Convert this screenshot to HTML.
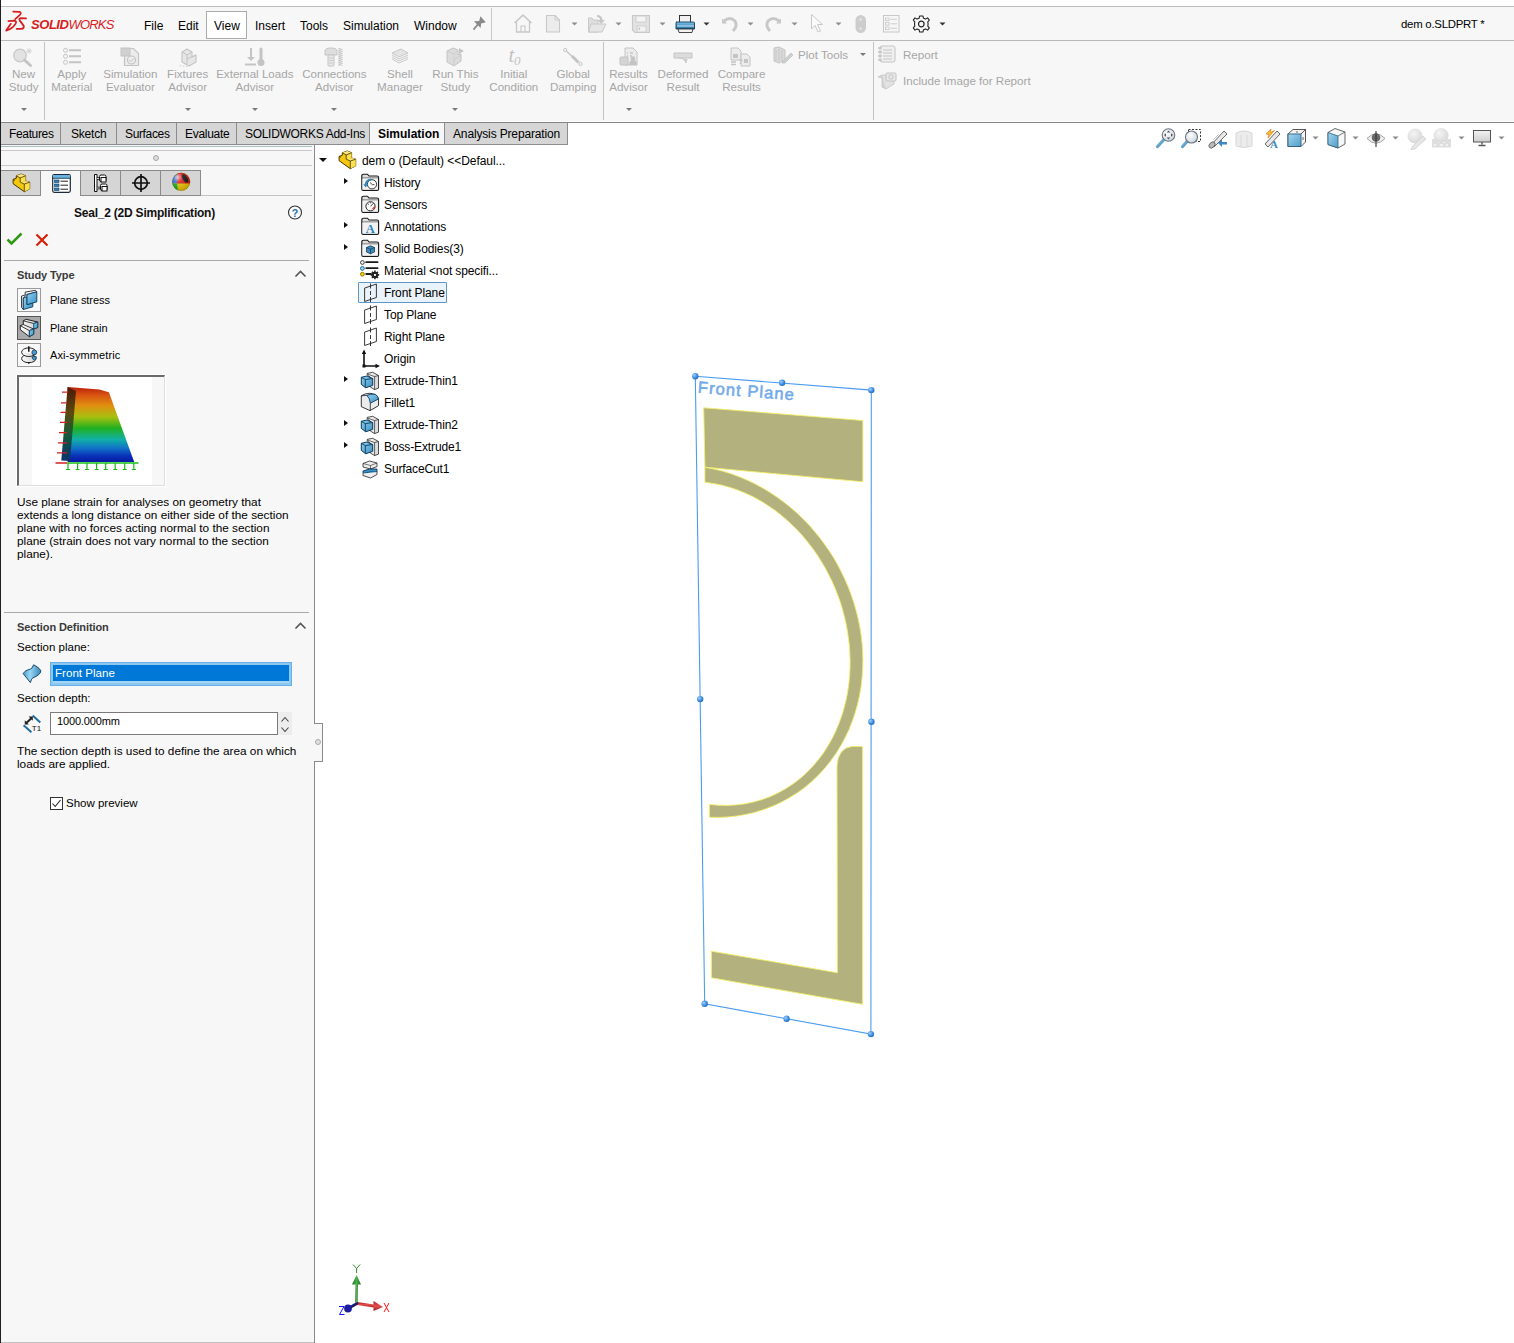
<!DOCTYPE html>
<html><head><meta charset="utf-8">
<style>
*{margin:0;padding:0;box-sizing:border-box}
html,body{width:1514px;height:1343px;overflow:hidden;background:#fff;font-family:"Liberation Sans",sans-serif;font-size:12px;color:#000}
.a{position:absolute}
svg{overflow:visible}
.t{position:absolute;white-space:nowrap;line-height:1}
#lb{left:0;top:0;width:1px;height:1343px;background:#1d2125}
#menubar{left:1px;top:6px;width:1513px;height:35px;background:#f7f7f7;border-top:1px solid #bdbdbd;border-bottom:1px solid #b9b9b9}
#ribbon{left:1px;top:41px;width:1513px;height:80px;background:#f7f7f7;border-bottom:0}
.rt{position:absolute;color:#a6a6a6;text-align:center;line-height:13px;font-size:11.6px;white-space:nowrap}
.dd{position:absolute;width:0;height:0;border-left:3px solid transparent;border-right:3px solid transparent;border-top:3px solid #7a7a7a}
.vsep{position:absolute;width:1px;background:#c3c3c3}
#tabbar{left:1px;top:123px;width:567px;height:22px;background:#d6d6d6;border-bottom:1px solid #8c8c8c}
.tab{position:absolute;top:0;height:21px;border-right:1px solid #8c8c8c;text-align:center;line-height:20px;font-size:12px}
#panel{left:1px;top:145px;width:313px;height:1198px;background:#f7f7f7}
#pborder{left:314px;top:145px;width:1px;height:1198px;background:#8a8a8a}
.hl{position:absolute;height:1px;background:#b5b5b5}
.pt{position:absolute;white-space:nowrap;font-size:11.5px;line-height:13px;color:#000}
.tree{position:absolute;white-space:nowrap;font-size:12px;line-height:14px;color:#000}
</style></head><body>
<div id="lb" class="a"></div>
<div id="menubar" class="a"></div>
<div id="ribbon" class="a"></div>

<!-- logo -->
<svg class="a" style="left:0px;top:6px" width="30" height="30" viewBox="0 0 30 30">
 <path d="M13.2 5.6 L19.3 5.8 Q21.6 6.3 20.2 8.6 L15.2 13.2" fill="none" stroke="#d71d1d" stroke-width="1.7" stroke-linecap="round" stroke-linejoin="round"/>
 <path d="M8.4 15.2 L14.2 14.6 Q17 14.8 15.6 17.6 Q12.5 22.8 6.2 24.6 L10.8 17.8" fill="none" stroke="#d71d1d" stroke-width="1.75" stroke-linecap="round" stroke-linejoin="round"/>
 <path d="M26 12.4 L20.8 12.2 Q18.6 12.4 19.8 14.6 L23.6 19.6 Q24.6 22.6 21.2 22.8 L16.6 22.8" fill="none" stroke="#d71d1d" stroke-width="1.8" stroke-linecap="round" stroke-linejoin="round"/>
</svg>
<div class="t" style="left:31px;top:18px;font-size:13px;color:#d71d1d;font-style:italic"><span style="font-weight:bold;letter-spacing:-0.45px">SOLID</span><span style="letter-spacing:-0.8px">WORKS</span></div>
<div class="a" style="left:206px;top:11px;width:41px;height:28px;background:#fff;border:1px solid #aaa"></div>
<div class="t" style="left:144px;top:20px">File</div>
<div class="t" style="left:178px;top:20px">Edit</div>
<div class="t" style="left:214px;top:20px">View</div>
<div class="t" style="left:255px;top:20px">Insert</div>
<div class="t" style="left:300px;top:20px">Tools</div>
<div class="t" style="left:343px;top:20px">Simulation</div>
<div class="t" style="left:414px;top:20px">Window</div>
<svg class="a" style="left:466px;top:10px" width="30" height="28" viewBox="466 10 30 28"><path d="M474 21.3 L479.2 21 L480.4 16.3 L485.8 22.3 L481.2 23.4 L480.6 28.1 Z" fill="#8a8a8a"/><path d="M478.5 23.6 L473.5 29.6" stroke="#8a8a8a" stroke-width="1.7"/></svg>
<div class="vsep" style="left:491px;top:8px;height:32px;background:#c8c8c8"></div>

<svg class="a" style="left:505px;top:10px" width="450" height="28" viewBox="505 10 450 28">
 <defs><linearGradient id="prb" x1="0" y1="0" x2="0" y2="1"><stop offset="0" stop-color="#7cc4ec"/><stop offset="1" stop-color="#1d6a9c"/></linearGradient></defs>
 <!-- home -->
 <path d="M514.5 23 L523 15.2 L531.5 23" fill="none" stroke="#c8c8c8" stroke-width="1.6"/>
 <path d="M516.5 21.5 V32 H529.5 V21.5" fill="none" stroke="#c8c8c8" stroke-width="1.3"/>
 <path d="M521 32 V26 H525 V32" fill="none" stroke="#c8c8c8" stroke-width="1.1"/>
 <!-- new -->
 <path d="M546.5 15.5 H555 L559.5 20 V32 H546.5 Z" fill="#ececec" stroke="#c8c8c8" stroke-width="1.1"/>
 <path d="M555 15.5 V20 H559.5" fill="none" stroke="#c8c8c8" stroke-width="0.9"/>
 <path d="M571.5 22.5h6l-3 3z" fill="#8e8e8e"/>
 <!-- open -->
 <path d="M588.5 18 H592 L593.5 20 H598 V32 H588.5 Z" fill="#dedede" stroke="#c8c8c8" stroke-width="1"/>
 <path d="M591 24 H606 L602 32 H588.5 Z" fill="#e6e6e6" stroke="#c8c8c8" stroke-width="1"/>
 <path d="M597 15 Q602 15 602.5 20 L605 20 L601 24 L597.5 20 L600 20 Q600 17 597 17 Z" fill="#c6c6c6"/>
 <path d="M615.5 22.5h6l-3 3z" fill="#8e8e8e"/>
 <!-- save -->
 <path d="M632.5 15.5 H649.5 V32.5 H635 L632.5 30 Z" fill="#e2e2e2" stroke="#c8c8c8" stroke-width="1.1"/>
 <rect x="636" y="16" width="10" height="6" fill="#f4f4f4" stroke="#c8c8c8" stroke-width="0.8"/>
 <rect x="637" y="26" width="9" height="6" fill="#f2f2f2" stroke="#c8c8c8" stroke-width="0.8"/><rect x="638.5" y="27.5" width="1.5" height="2.5" fill="#c8c8c8"/>
 <path d="M659.5 22.5h6l-3 3z" fill="#8e8e8e"/>
 <!-- print -->
 <rect x="679.5" y="15.5" width="11" height="8" fill="#f0f0f0" stroke="#333" stroke-width="1"/>
 <path d="M676.5 22 H693.5 Q694.5 22 694.5 23 V29 H676 V23 Q676 22 677 22 Z" fill="url(#prb)" stroke="#123a55" stroke-width="0.9"/>
 <path d="M677 26 H694" stroke="#dff2ff" stroke-width="0.9"/>
 <path d="M678 29 L679 32.5 H692 L693 29 Z" fill="#f2f2f2" stroke="#333" stroke-width="0.9"/>
 <path d="M703.5 22.5h6l-3 3z" fill="#333"/>
 <!-- undo -->
 <path d="M722 18.5 V23.5 H727 Z" fill="#c8c8c8"/>
 <path d="M724 21 Q730 16 735 21 Q738 26 733 31" fill="none" stroke="#c8c8c8" stroke-width="3"/>
 <path d="M747.5 22.5h6l-3 3z" fill="#8e8e8e"/>
 <!-- redo -->
 <path d="M781 18.5 V23.5 H776 Z" fill="#c8c8c8"/>
 <path d="M779 21 Q773 16 768 21 Q765 26 770 31" fill="none" stroke="#c8c8c8" stroke-width="3"/>
 <path d="M791.5 22.5h6l-3 3z" fill="#8e8e8e"/>
 <!-- select -->
 <path d="M811.5 14.5 V29 L815 25.5 L818 32 L820.5 31 L817.5 24.5 L822.5 24.5 Z" fill="#fafafa" stroke="#c8c8c8" stroke-width="1"/>
 <path d="M835.5 22.5h6l-3 3z" fill="#8e8e8e"/>
 <!-- traffic -->
 <rect x="855.5" y="15" width="10.5" height="18" rx="5.2" fill="#cdcdcd"/>
 <circle cx="860.7" cy="19.5" r="1.2" fill="#e6e6e6"/><circle cx="860.7" cy="28.5" r="1.2" fill="#e6e6e6"/>
 <!-- options list -->
 <rect x="883.5" y="15.5" width="15.5" height="16.5" fill="#f6f6f6" stroke="#c8c8c8" stroke-width="1"/>
 <rect x="885.5" y="18" width="3.5" height="2.6" fill="none" stroke="#c8c8c8" stroke-width="0.8"/><rect x="885.5" y="22.5" width="3.5" height="2.6" fill="none" stroke="#c8c8c8" stroke-width="0.8"/><rect x="885.5" y="27" width="3.5" height="2.6" fill="none" stroke="#c8c8c8" stroke-width="0.8"/>
 <path d="M890.5 19.3H897M890.5 23.8H897M890.5 28.3H897" stroke="#c8c8c8" stroke-width="0.9"/>
 <!-- gear -->
 <g transform="translate(921.3 24)">
  <path d="M-1.6 -8 H1.6 L2.2 -5.8 L4.3 -4.9 L6.3 -6.1 L8 -3.9 L6.5 -2.2 L6.8 0 L6.5 2.2 L8 3.9 L6.3 6.1 L4.3 4.9 L2.2 5.8 L1.6 8 H-1.6 L-2.2 5.8 L-4.3 4.9 L-6.3 6.1 L-8 3.9 L-6.5 2.2 L-6.8 0 L-6.5 -2.2 L-8 -3.9 L-6.3 -6.1 L-4.3 -4.9 L-2.2 -5.8 Z" fill="#f7f7f7" stroke="#222" stroke-width="1.1" stroke-linejoin="round"/>
  <circle r="2.8" fill="#f7f7f7" stroke="#222" stroke-width="1.2"/>
 </g>
 <path d="M939.5 22.5h6l-3 3z" fill="#333"/>
</svg>
<div class="t" style="left:1401px;top:18.6px;font-size:11.4px;letter-spacing:-0.25px">dem o.SLDPRT *</div>

<div class="rt" style="left:-21.4px;top:67px;width:90px">New<br>Study</div><div class="dd" style="left:20.6px;top:108px"></div><div class="rt" style="left:26.799999999999997px;top:67px;width:90px">Apply<br>Material</div><div class="rt" style="left:85.4px;top:67px;width:90px">Simulation<br>Evaluator</div><div class="rt" style="left:142.7px;top:67px;width:90px">Fixtures<br>Advisor</div><div class="dd" style="left:184.7px;top:108px"></div><div class="rt" style="left:209.8px;top:67px;width:90px">External Loads<br>Advisor</div><div class="dd" style="left:251.8px;top:108px"></div><div class="rt" style="left:289.4px;top:67px;width:90px">Connections<br>Advisor</div><div class="dd" style="left:331.4px;top:108px"></div><div class="rt" style="left:355.0px;top:67px;width:90px">Shell<br>Manager</div><div class="rt" style="left:410.4px;top:67px;width:90px">Run This<br>Study</div><div class="dd" style="left:452.4px;top:108px"></div><div class="rt" style="left:468.79999999999995px;top:67px;width:90px">Initial<br>Condition</div><div class="rt" style="left:528.2px;top:67px;width:90px">Global<br>Damping</div><div class="rt" style="left:583.5px;top:67px;width:90px">Results<br>Advisor</div><div class="dd" style="left:625.5px;top:108px"></div><div class="rt" style="left:638.0px;top:67px;width:90px">Deformed<br>Result</div><div class="rt" style="left:696.6px;top:67px;width:90px">Compare<br>Results</div><div class="vsep" style="left:44px;top:42px;height:78px"></div><div class="vsep" style="left:603px;top:42px;height:78px"></div><div class="vsep" style="left:873px;top:42px;height:78px"></div><div class="rt" style="left:798px;top:48px;text-align:left">Plot Tools</div><div class="dd" style="left:860px;top:53px"></div><div class="rt" style="left:903px;top:48px;text-align:left">Report</div><div class="rt" style="left:903px;top:74px;text-align:left">Include Image for Report</div>
<svg class="a" style="left:12px;top:47px" width="22" height="20" viewBox="0 0 22 20">
 <circle cx="8" cy="8.5" r="6.3" fill="#e2e2e2" stroke="#c8c8c8" stroke-width="1.2"/>
 <path d="M12.5 13 L18.5 18.5" stroke="#c4c4c4" stroke-width="3" stroke-linecap="round"/>
 <path d="M17 1v6M14 4h6M15 2l4 4M19 2l-4 4" stroke="#d0d0d0" stroke-width="0.8"/>
</svg>
<svg class="a" style="left:62px;top:47px" width="22" height="19" viewBox="0 0 22 19">
 <circle cx="3.5" cy="3.3" r="2" fill="none" stroke="#c4c4c4"/><circle cx="3.5" cy="9.3" r="2" fill="none" stroke="#c4c4c4"/><circle cx="3.5" cy="15.3" r="2" fill="none" stroke="#c4c4c4"/>
 <path d="M7 3.3h12M7 9.3h12M7 15.3h12" stroke="#c4c4c4" stroke-width="2"/>
</svg>
<svg class="a" style="left:120px;top:47px" width="20" height="20" viewBox="0 0 20 20">
 <path d="M4.5 1.5h9l5 5v12h-14z" fill="#ececec" stroke="#c4c4c4" stroke-width="1.2"/>
 <rect x="1" y="1" width="9" height="8" fill="#d0d0d0" stroke="#c4c4c4"/>
 <circle cx="11.5" cy="13" r="4" fill="none" stroke="#c4c4c4" stroke-width="1.2"/><path d="M9.5 13l1.5 1.5 2.8-3" stroke="#c4c4c4" fill="none"/>
</svg>
<svg class="a" style="left:179px;top:47px" width="20" height="20" viewBox="0 0 20 20">
 <path d="M3 5l5-3 5 3v5l4-2 0 0v7l-7 4-7-4z" fill="#e6e6e6" stroke="#c4c4c4" stroke-width="1.1" stroke-linejoin="round"/>
 <path d="M3 5l5 3 5-3M8 8v9M8 12l9-4" fill="none" stroke="#c4c4c4" stroke-width="1"/>
 <path d="M2 18l-1 1.5M5 18.5l-1 1.5M8 19l-1 1" stroke="#c4c4c4" stroke-width="0.8"/>
</svg>
<svg class="a" style="left:244px;top:47px" width="22" height="20" viewBox="0 0 22 20">
 <path d="M7 1v12" stroke="#c4c4c4" stroke-width="2"/><path d="M3 10l4 4 4-4z" fill="#c4c4c4"/><path d="M1 17.5h11" stroke="#c4c4c4" stroke-width="2"/>
 <path d="M17 2v11" stroke="#c4c4c4" stroke-width="3" stroke-linecap="round"/><circle cx="17" cy="15.5" r="3.5" fill="#c4c4c4"/>
</svg>
<svg class="a" style="left:324px;top:47px" width="22" height="20" viewBox="0 0 22 20">
 <path d="M1 4q0-3 6-3t6 3v4h-12z" fill="#dedede" stroke="#c4c4c4"/><rect x="4" y="8" width="6" height="11" rx="1" fill="#e8e8e8" stroke="#c4c4c4"/>
 <path d="M5 11h4M5 13.5h4M5 16h4" stroke="#c4c4c4" stroke-width="0.8"/>
 <path d="M15 1.5l3.5 1-3.5 1 3.5 1-3.5 1 3.5 1-3.5 1 3.5 1-3.5 1 3.5 1-3.5 1 3.5 1-3.5 1 3.5 1-3.5 1 3.5 1-3.5 1 3.5 1" fill="none" stroke="#c4c4c4" stroke-width="0.8"/><path d="M15 1v18" stroke="#c4c4c4" stroke-width="0.9"/>
</svg>
<svg class="a" style="left:391px;top:48px" width="18" height="16" viewBox="0 0 18 16">
 <path d="M1 5l9-4 7 4-9 4z" fill="#e4e4e4" stroke="#c4c4c4" stroke-width="0.9"/>
 <path d="M1 7l7 4 9-4M1 9l7 4 9-4M1 11l7 4 9-4" fill="none" stroke="#c4c4c4" stroke-width="0.9"/>
</svg>
<svg class="a" style="left:446px;top:47px" width="19" height="20" viewBox="0 0 19 20">
 <path d="M1 4l6-3 5 2v5l3-1v7l-7 5-7-4z" fill="#dcdcdc" stroke="#c4c4c4" stroke-linejoin="round"/>
 <path d="M1 4l7 3 4-4M8 7v12M8 13l7-5" fill="none" stroke="#cfcfcf"/>
 <path d="M13 1v6l5-3z" fill="#c4c4c4"/>
</svg>
<svg class="a" style="left:500px;top:44px" width="30" height="26" viewBox="500 44 30 26"><text x="508.5" y="62" font-family="Liberation Serif" font-style="italic" font-size="21" fill="#c2c2c2">t</text><text x="514" y="64.5" font-family="Liberation Serif" font-style="italic" font-size="13" fill="#c2c2c2">0</text></svg>
<svg class="a" style="left:563px;top:48px" width="20" height="18" viewBox="0 0 20 18">
 <circle cx="2.2" cy="2" r="1.6" fill="none" stroke="#c4c4c4"/><circle cx="17.5" cy="16" r="1.6" fill="none" stroke="#c4c4c4"/>
 <path d="M3.5 3.2l6 5.5" stroke="#c4c4c4" stroke-width="1.3"/><path d="M9 8l6.5 6.5" stroke="#c4c4c4" stroke-width="3"/>
</svg>
<svg class="a" style="left:619px;top:47px" width="19" height="19" viewBox="0 0 19 19">
 <path d="M6 1h8l4 4v13h-12z" fill="#ececec" stroke="#c4c4c4"/>
 <path d="M8 6h1M11 6h3M8 9h1M11 9h2M8 12h1" stroke="#c4c4c4" stroke-width="1.3"/>
 <rect x="1" y="10" width="8" height="8" rx="1" fill="#d4d4d4" stroke="#c4c4c4"/><circle cx="14" cy="11.5" r="2.3" fill="#c4c4c4"/><path d="M10 18q0-5 4-5t4 5z" fill="#c4c4c4"/>
</svg>
<svg class="a" style="left:673px;top:52px" width="20" height="11" viewBox="0 0 20 11">
 <path d="M1 1h18v5h-18z" fill="#dcdcdc" stroke="#c4c4c4"/><path d="M6 6q4 0 6 3l1 2 1-4" fill="#cfcfcf" stroke="#c4c4c4" stroke-width="0.8"/>
</svg>
<svg class="a" style="left:730px;top:47px" width="22" height="20" viewBox="0 0 22 20">
 <path d="M1 1h7l3 3v9h-10z" fill="#ececec" stroke="#c4c4c4"/><rect x="3" y="7" width="5" height="4" fill="#c4c4c4"/>
 <path d="M11 7h6l3 3v9h-9z" fill="#ececec" stroke="#c4c4c4"/><rect x="14" y="12" width="4" height="4" fill="#c4c4c4"/>
 <path d="M1 15h5M1 17.5h5" stroke="#c4c4c4" stroke-width="1.4"/><text x="8" y="17" font-size="8" font-family="Liberation Sans" font-weight="bold" fill="#c4c4c4">?</text>
</svg>
<svg class="a" style="left:772px;top:46px" width="22" height="18" viewBox="0 0 22 18">
 <path d="M2 2l5-1 6 3v10l-6 3-5-2z" fill="#dadada" stroke="#c4c4c4"/><path d="M4 4v11M7 3v12M10 4v11" stroke="#c8c8c8"/>
 <path d="M11 15l8-8 2 2-8 8-3 0z" fill="#cfcfcf" stroke="#c4c4c4" stroke-width="0.8"/>
</svg>
<svg class="a" style="left:877px;top:45px" width="20" height="18" viewBox="0 0 20 18">
 <rect x="3" y="1" width="15" height="16" rx="2" fill="#f0f0f0" stroke="#c4c4c4"/><path d="M6 5h9M6 8h9M6 11h9M6 14h9" stroke="#c4c4c4"/>
 <path d="M1 3h4M1 7h4M1 11h4M1 15h4" stroke="#c4c4c4" stroke-width="1.3"/>
</svg>
<svg class="a" style="left:877px;top:71px" width="20" height="19" viewBox="0 0 20 19">
 <path d="M1 6l4-2v12l4 2v-11z" fill="#d4d4d4" stroke="#c4c4c4" stroke-width="0.8"/><path d="M5 4l12 0v9l-8 5" fill="#e2e2e2" stroke="#c4c4c4" stroke-width="0.8"/>
 <rect x="9" y="2" width="10" height="8" rx="1" fill="#e8e8e8" stroke="#c4c4c4"/><circle cx="14" cy="6" r="2.2" fill="none" stroke="#c4c4c4"/>
</svg>

<div id="tabbar" class="a"></div>
<div class="a" style="left:1px;top:122px;width:1513px;height:1px;background:#858585"></div>
<div id="panel" class="a"></div>
<div id="pborder" class="a"></div>

<div class="a" style="left:60px;top:123px;width:1px;height:21px;background:#8c8c8c"></div>
<div class="a" style="left:116px;top:123px;width:1px;height:21px;background:#8c8c8c"></div>
<div class="a" style="left:176px;top:123px;width:1px;height:21px;background:#8c8c8c"></div>
<div class="a" style="left:236px;top:123px;width:1px;height:21px;background:#8c8c8c"></div>
<div class="a" style="left:369px;top:123px;width:1px;height:21px;background:#8c8c8c"></div>
<div class="a" style="left:370px;top:123px;width:74px;height:21px;background:#f7f7f7"></div>
<div class="a" style="left:444px;top:123px;width:1px;height:21px;background:#8c8c8c"></div>
<div class="a" style="left:567px;top:123px;width:1px;height:22px;background:#8c8c8c"></div>
<div class="t" style="left:9px;top:128px;letter-spacing:-0.35px">Features</div>
<div class="t" style="left:71px;top:128px;letter-spacing:-0.2px">Sketch</div>
<div class="t" style="left:125px;top:128px;letter-spacing:-0.35px">Surfaces</div>
<div class="t" style="left:185px;top:128px;letter-spacing:-0.3px">Evaluate</div>
<div class="t" style="left:245px;top:128px;letter-spacing:-0.3px">SOLIDWORKS Add-Ins</div>
<div class="t" style="left:378px;top:128px;font-weight:bold">Simulation</div>
<div class="t" style="left:453px;top:128px;letter-spacing:-0.15px">Analysis Preparation</div>

<div class="hl" style="left:1px;top:146px;width:311px;background:#a6c0c4"></div>
<div class="hl" style="left:1px;top:147px;width:311px;height:3px;background:#fafafa"></div>
<div class="hl" style="left:1px;top:150px;width:311px;background:#c9c9c9"></div>
<div class="a" style="left:153px;top:155px;width:6px;height:6px;border-radius:50%;border:1px solid #a8a8a8;background:#dcdcdc"></div>
<div class="hl" style="left:1px;top:165px;width:311px;background:#c9c9c9"></div>
<div class="a" style="left:1px;top:170px;width:200px;height:26px;background:#d5d5d5;border-top:1px solid #8a8a8a;border-bottom:1px solid #8a8a8a"></div>
<div class="hl" style="left:200px;top:195px;width:112px;background:#c4c4c4"></div>
<div class="a" style="left:41px;top:171px;width:39px;height:25px;background:#f7f7f7"></div>
<div class="a" style="left:40px;top:171px;width:1px;height:24px;background:#8a8a8a"></div>
<div class="a" style="left:80px;top:171px;width:1px;height:24px;background:#8a8a8a"></div>
<div class="a" style="left:120px;top:171px;width:1px;height:24px;background:#8a8a8a"></div>
<div class="a" style="left:160px;top:171px;width:1px;height:24px;background:#8a8a8a"></div>
<div class="a" style="left:200px;top:170px;width:1px;height:26px;background:#8a8a8a"></div>
<!-- part icon -->
<svg class="a" style="left:9px;top:171px" width="25" height="25" viewBox="0 0 25 25"><path d="M4.1 8.4 L7.3 7.3 L7.3 4.8 L12.3 3 L16.6 4.8 L16.6 10 L20.7 11.2 L20.7 17.9 L15.3 20.7 L4.1 12.7 Z" fill="#f3c80f" stroke="#4a3600" stroke-width="1" stroke-linejoin="round"/>
 <path d="M7.3 4.8 L11.2 6.9 L16.6 4.8 L12.3 3 Z" fill="#fbe680"/>
 <path d="M11.2 6.9 L16.6 4.8 L16.6 10 L14.1 11.2 L11.2 11.2 Z" fill="#f9e050"/>
 <path d="M11.2 11.2 L14.1 11.2 L17.9 9.9 L20.7 11.2 L15.3 13 Z" fill="#fbe680"/>
 <path d="M15.3 13 L20.7 11.2 L20.7 17.9 L15.3 20.7 Z" fill="#f9e050"/>
 <path d="M7.3 4.8 L11.2 6.9 L16.6 4.8 M11.2 6.9 V11.2 L15.3 13 L20.7 11.2 M15.3 13 V20.7 M4.1 8.4 L6 9.4" fill="none" stroke="#4a3600" stroke-width="0.8"/></svg>
<!-- property list icon -->
<svg class="a" style="left:52px;top:174px" width="19" height="19" viewBox="0 0 19 19">
 <rect x="0.7" y="0.7" width="17.6" height="17.6" rx="1.5" fill="#fff" stroke="#1c2a38" stroke-width="1.2"/>
 <rect x="1" y="1" width="17" height="3" fill="#6ab4e0"/><path d="M1 4.3h17" stroke="#0e3a5c" stroke-width="0.9"/>
 <rect x="2.5" y="6" width="4.5" height="2.5" fill="#2e7fb8" stroke="#0e3a5c" stroke-width="0.6"/><rect x="2.5" y="10" width="4.5" height="2.5" fill="#2e7fb8" stroke="#0e3a5c" stroke-width="0.6"/><rect x="2.5" y="14" width="4.5" height="2.5" fill="#2e7fb8" stroke="#0e3a5c" stroke-width="0.6"/>
 <path d="M8.5 7.2h7.5M8.5 11.2h7.5M8.5 15.2h7.5" stroke="#222" stroke-width="1"/>
</svg>
<!-- config icon -->
<svg class="a" style="left:93px;top:173px" width="16" height="20" viewBox="0 0 16 20">
 <path d="M1.5 1.5h2.5v17h-2.5z" fill="#fff" stroke="#111" stroke-width="1"/>
 <path d="M4 5.5h3M4 15h3" stroke="#111" stroke-width="2.6"/><path d="M4 5.5h3M4 15h3" stroke="#fff" stroke-width="0.8"/>
 <rect x="6.5" y="2" width="6.5" height="6.5" rx="1.5" fill="#fff" stroke="#111"/><rect x="8" y="4.5" width="5" height="4.5" fill="#fff" stroke="#111"/>
 <rect x="7.5" y="11" width="6.5" height="6.5" rx="1.5" fill="#fff" stroke="#111"/><rect x="9" y="13.5" width="5" height="4.5" fill="#fff" stroke="#111"/>
</svg>
<!-- crosshair -->
<svg class="a" style="left:131px;top:173px" width="20" height="20" viewBox="0 0 20 20">
 <circle cx="10" cy="10" r="6.3" fill="none" stroke="#111" stroke-width="1.7"/><path d="M10 1v18M1 10h18" stroke="#111" stroke-width="1.7"/>
</svg>
<!-- appearance ball -->
<svg class="a" style="left:168px;top:170px" width="28" height="26" viewBox="168 170 28 26">
 <defs><radialGradient id="bg1" cx="0.3" cy="0.25" r="0.75"><stop offset="0" stop-color="#fff" stop-opacity="0.75"/><stop offset="0.35" stop-color="#fff" stop-opacity="0.15"/><stop offset="1" stop-color="#000" stop-opacity="0.15"/></radialGradient>
 <clipPath id="ballc"><circle cx="181.2" cy="181.8" r="9"/></clipPath></defs>
 <g clip-path="url(#ballc)">
  <rect x="160" y="160" width="40" height="40" fill="#e8c000"/>
  <path d="M177.1 165 L177.1 183.6 L200 183.6 L200 160 Z" fill="#d81818"/>
  <path d="M177.1 160 L177.1 183.6 L160 183.6 L160 160 Z" fill="#2a66d8"/>
  <path d="M160 183.6 L177.1 183.6 L179 200 L160 200 Z" fill="#10b020"/>
  <ellipse cx="185" cy="178.5" rx="2.3" ry="4.6" transform="rotate(-32 185 178.5)" fill="#111"/>
  <circle cx="181.2" cy="181.8" r="9" fill="url(#bg1)"/>
 </g>
 <circle cx="181.2" cy="181.8" r="8.7" fill="none" stroke="#5a3a10" stroke-opacity="0.45" stroke-width="0.7"/>
</svg>


<div class="t" style="left:74px;top:207px;font-size:12px;font-weight:bold;letter-spacing:-0.22px;color:#111">Seal_2 (2D Simplification)</div>
<svg class="a" style="left:287px;top:205px" width="16" height="16" viewBox="0 0 16 16"><circle cx="8" cy="7.5" r="6.5" fill="#fafafa" stroke="#333" stroke-width="1.1"/><text x="8" y="11.5" text-anchor="middle" font-family="Liberation Sans" font-weight="bold" font-size="10.5" fill="#1f6fb5">?</text></svg>
<svg class="a" style="left:6px;top:232px" width="17" height="14" viewBox="0 0 17 14"><path d="M1.5 7.5 L5.5 11.5 L15.5 1.5" fill="none" stroke="#2e9a14" stroke-width="2.5"/></svg>
<svg class="a" style="left:35px;top:233px" width="14" height="14" viewBox="0 0 14 14"><path d="M1.5 1.5 L12.5 12.5 M12.5 1.5 L1.5 12.5" fill="none" stroke="#d8200a" stroke-width="2.2"/></svg>
<div class="hl" style="left:4px;top:260px;width:305px;background:#a8a8a8"></div>
<div class="t" style="left:17px;top:270px;font-size:11px;font-weight:bold;color:#3a3a3a;letter-spacing:-0.1px">Study Type</div>
<svg class="a" style="left:294px;top:269px" width="13" height="9" viewBox="0 0 13 9"><path d="M1.5 7.5 L6.5 2.5 L11.5 7.5" fill="none" stroke="#555" stroke-width="1.6"/></svg>
<div class="a" style="left:17px;top:288px;width:24px;height:24px;border:1px solid #9a9a9a;background:#f9f9f9"></div>
<div class="a" style="left:17px;top:316px;width:24px;height:24px;border:1px solid #555;background:#a9a9a9"></div>
<div class="a" style="left:17px;top:343px;width:24px;height:24px;border:1px solid #9a9a9a;background:#f9f9f9"></div>
<!-- study type icons -->
<svg class="a" style="left:17px;top:288px" width="24" height="80" viewBox="17 288 24 80">
 <defs><linearGradient id="psb" x1="0" y1="0" x2="1" y2="1"><stop offset="0" stop-color="#8ed4f4"/><stop offset="1" stop-color="#3a8cc0"/></linearGradient>
 <linearGradient id="wg2" x1="0" y1="0" x2="1" y2="0"><stop offset="0" stop-color="#fdfdfd"/><stop offset="1" stop-color="#cfcfcf"/></linearGradient></defs>
 <path d="M21.5 296.1 L25.2 295 L25.2 292.1 L35.5 290.3 L36.8 291.8 L27 294.5 L23.3 297.9 L23.3 309.5 L21.5 307.4 Z" fill="#f4f4f4" stroke="#111" stroke-width="0.8" stroke-linejoin="round"/>
 <path d="M23.3 297.9 L27 296.9 L27 304.6 L32.8 303 L32.8 306.8 L23.3 309.5 Z" fill="url(#psb)" stroke="#0b3a5c" stroke-width="0.9" stroke-linejoin="round"/>
 <path d="M27 294.5 L36.8 291.8 L36.8 301.9 L27 304.6 Z" fill="url(#psb)" stroke="#0b3a5c" stroke-width="0.9" stroke-linejoin="round"/>
 <!-- plane strain -->
 <path d="M20.3 325.7 L23.3 324.5 L23.3 320.8 L26.1 319.3 L37.7 322 L37.7 327.5 L33.7 329 L33.7 334.2 L29.4 336.7 L20.3 329.7 Z" fill="url(#wg2)" stroke="#111" stroke-width="0.9" stroke-linejoin="round"/>
 <path d="M23.3 320.8 L33.7 323.5 L37.7 322 M23.3 324.5 L33.7 329 M20.3 325.7 L29.4 330.6 L33.7 329 M29.4 330.6 V336.7" fill="none" stroke="#111" stroke-width="0.8"/>
 <path d="M33.7 323.5 L37.7 322 L37.7 327.5 L33.7 329 Z M29.4 330.6 L33.7 328.9 L33.7 334.2 L29.4 336.7 Z" fill="url(#psb)" stroke="#0b3a5c" stroke-width="0.8"/>
 <!-- axi -->
 <ellipse cx="28.8" cy="358.6" rx="7.2" ry="4.1" fill="url(#wg2)" stroke="#111" stroke-width="0.9"/>
 <ellipse cx="28.8" cy="352.2" rx="7.2" ry="4.3" fill="url(#wg2)" stroke="#111" stroke-width="0.9"/>
 <ellipse cx="28.8" cy="351" rx="5.5" ry="2.2" fill="#fafafa"/>
 <path d="M28.8 346.3 V351.8" stroke="#111" stroke-width="1.5"/><circle cx="28.8" cy="362.8" r="0.9" fill="#111"/>
 <circle cx="34.3" cy="352.4" r="2.4" fill="#4a9ccc" stroke="#0b3a5c" stroke-width="0.8"/>
 <path d="M32 357 Q34.3 356 36.4 356.8 Q36 359.8 34.3 360.3 Q32.5 359.5 32 357 Z" fill="#4a9ccc" stroke="#0b3a5c" stroke-width="0.8"/>
</svg>
<div class="t" style="left:50px;top:295px;font-size:11px;letter-spacing:-0.05px">Plane stress</div>
<div class="t" style="left:50px;top:323px;font-size:11px;letter-spacing:-0.05px">Plane strain</div>
<div class="t" style="left:50px;top:350px;font-size:11px;letter-spacing:0.1px">Axi-symmetric</div>
<!-- preview image -->
<div class="a" style="left:16px;top:374px;width:150px;height:113px;background:#f7f7f7;border-top:1px solid #fff;border-left:1px solid #fff;border-right:1px solid #fff;border-bottom:1px solid #fff"></div><div class="a" style="left:17px;top:375px;width:148px;height:111px;border-top:2px solid #6a6a6a;border-left:2px solid #6a6a6a;border-right:1px solid #dedede;border-bottom:1px solid #dedede"></div>
<div class="a" style="left:32px;top:377px;width:120px;height:108px;background:#fff"></div>
<svg class="a" style="left:32px;top:378px" width="120" height="106" viewBox="32 378 120 106">
 <defs>
  <linearGradient id="cg" x1="0" y1="0" x2="0" y2="1">
   <stop offset="0" stop-color="#b81e08"/><stop offset="0.1" stop-color="#d85010"/><stop offset="0.25" stop-color="#e09010"/><stop offset="0.4" stop-color="#a8c010"/>
   <stop offset="0.55" stop-color="#20b020"/><stop offset="0.7" stop-color="#10b0a8"/><stop offset="0.82" stop-color="#1070c8"/><stop offset="0.92" stop-color="#0a30b8"/><stop offset="1" stop-color="#0818a0"/>
  </linearGradient>
  <linearGradient id="cg2" x1="0" y1="0" x2="0" y2="1">
   <stop offset="0" stop-color="#501808"/><stop offset="0.35" stop-color="#5a4a10"/><stop offset="0.65" stop-color="#145a3a"/><stop offset="1" stop-color="#0a3070"/>
  </linearGradient>
 </defs>
 <path d="M67.6 386.9 L99.3 389.4 L108.9 392.2 L134.2 462 L67.6 462 Z" fill="url(#cg)"/>
 <path d="M67.6 386.9 L76 391 L70 461 L61.3 460.5 Z" fill="url(#cg2)"/>
 <g stroke="#d82020" stroke-width="1.3">
  <path d="M62 392.2h6M61 402.8h6M60.5 412.3h6M60 422.4h7M59 432.6h8M58 442.9h9M57 452.9h10M55.5 463h12"/>
 </g>
 <path d="M67.6 463 H138.5" stroke="#18c018" stroke-width="1.3"/>
 <g stroke="#18b818" stroke-width="1.2">
  <path d="M68 463v7M77.6 463v7M87 463v7M96.6 463v7M105.7 463v7M115.2 463v7M124.7 463v7M133.8 463v7"/>
  <path d="M66 469.5h4M75.6 469.5h4M85 469.5h4M94.6 469.5h4M103.7 469.5h4M113.2 469.5h4M122.7 469.5h4M131.8 469.5h4"/>
 </g>
</svg>
<div class="a" style="left:17px;top:496px;width:295px;font-size:11.8px;line-height:13px;color:#000">Use plane strain for analyses on geometry that<br>extends a long distance on either side of the section<br>plane with no forces acting normal to the section<br>plane (strain does not vary normal to the section<br>plane).</div>
<div class="hl" style="left:4px;top:612px;width:305px;background:#a8a8a8"></div>
<div class="t" style="left:17px;top:622px;font-size:11px;font-weight:bold;color:#3a3a3a;letter-spacing:-0.1px">Section Definition</div>
<svg class="a" style="left:294px;top:621px" width="13" height="9" viewBox="0 0 13 9"><path d="M1.5 7.5 L6.5 2.5 L11.5 7.5" fill="none" stroke="#555" stroke-width="1.6"/></svg>
<div class="t" style="left:17px;top:642px;font-size:11.5px">Section plane:</div>

<div class="a" style="left:50px;top:662px;width:242px;height:24px;background:#8cc8f0;border:1px solid #6ab0e6"></div>
<div class="a" style="left:53px;top:665px;width:236px;height:16px;background:#0078d7"></div>
<div class="a" style="left:53px;top:681px;width:236px;height:2px;background:#a6d4f4"></div>
<div class="t" style="left:55px;top:667px;font-size:11.6px;color:#fff">Front Plane</div>
<div class="t" style="left:17px;top:693px;font-size:11.5px">Section depth:</div>
<svg class="a" style="left:18px;top:660px" width="28" height="76" viewBox="18 660 28 76">
 <defs><linearGradient id="wg" x1="0" y1="0" x2="1" y2="0"><stop offset="0" stop-color="#4a9cc4"/><stop offset="0.4" stop-color="#9ad8f4"/><stop offset="1" stop-color="#3a88b8"/></linearGradient></defs>
 <path d="M23.1 673.6 Q25 670.8 27 670.2 Q31 669 31.6 668.5 L33.6 664.8 Q38 666.5 40.6 670.2 L40.6 672.4 Q39 674.8 36.1 676.4 Q32 678 31.6 679.2 L30.4 682.6 Z" fill="url(#wg)" stroke="#0b3a5c" stroke-width="0.9" stroke-linejoin="round"/>
 <path d="M32.7 715.6 L40.3 722.6 M23.6 725.2 L31.4 732.2" stroke="#1f6fa0" stroke-width="2"/>
 <path d="M26.3 723 L31.4 718.3" stroke="#222" stroke-width="2"/>
 <path d="M24.8 720.3 L24.8 724.6 L28.8 724.6 Z M32.8 720.8 L32.8 716.4 L28.6 716.4 Z" fill="#222"/>
 <text x="31.8" y="731" font-family="Liberation Sans" font-size="8" fill="#111">T1</text>
</svg>
<div class="a" style="left:50px;top:712px;width:228px;height:23px;background:#fff;border:1px solid #7a7a7a"></div>
<div class="t" style="left:57px;top:716px;font-size:11px;letter-spacing:-0.15px">1000.000mm</div>
<div class="a" style="left:278px;top:712px;width:14px;height:23px;background:#ededed"></div>
<svg class="a" style="left:279px;top:713px" width="12" height="22" viewBox="0 0 12 22"><path d="M2.5 8.5 L6 4.5 L9.5 8.5 M2.5 14.5 L6 18.5 L9.5 14.5" fill="none" stroke="#444" stroke-width="1.1"/></svg>
<div class="a" style="left:17px;top:745px;width:295px;font-size:11.8px;line-height:13px">The section depth is used to define the area on which<br>loads are applied.</div>
<div class="a" style="left:50px;top:797px;width:13px;height:13px;border:1px solid #333;background:#fff"></div>
<svg class="a" style="left:51px;top:798px" width="11" height="11" viewBox="0 0 11 11"><path d="M1.5 5.5 L4.2 8.5 L9.5 2" fill="none" stroke="#222" stroke-width="1.1"/></svg>
<div class="t" style="left:66px;top:798px;font-size:11.5px">Show preview</div>
<!-- notch -->
<div class="a" style="left:314px;top:723px;width:9px;height:39px;background:#f7f7f7;border:1px solid #8a8a8a;border-left:none"></div>
<div class="a" style="left:315px;top:739px;width:6px;height:6px;border-radius:50%;border:1px solid #a8a8a8;background:#e0e0e0"></div>
<div class="hl" style="left:1px;top:1342px;width:313px;background:#c0c0c0"></div>


<div class="a" style="left:318.5px;top:158px;width:0;height:0;border-left:4px solid transparent;border-right:4px solid transparent;border-top:4.5px solid #111"></div>
<svg class="a" style="left:335px;top:148px" width="25" height="25" viewBox="0 0 25 25"><path d="M4.1 8.4 L7.3 7.3 L7.3 4.8 L12.3 3 L16.6 4.8 L16.6 10 L20.7 11.2 L20.7 17.9 L15.3 20.7 L4.1 12.7 Z" fill="#f3c80f" stroke="#4a3600" stroke-width="1" stroke-linejoin="round"/>
 <path d="M7.3 4.8 L11.2 6.9 L16.6 4.8 L12.3 3 Z" fill="#fbe680"/>
 <path d="M11.2 6.9 L16.6 4.8 L16.6 10 L14.1 11.2 L11.2 11.2 Z" fill="#f9e050"/>
 <path d="M11.2 11.2 L14.1 11.2 L17.9 9.9 L20.7 11.2 L15.3 13 Z" fill="#fbe680"/>
 <path d="M15.3 13 L20.7 11.2 L20.7 17.9 L15.3 20.7 Z" fill="#f9e050"/>
 <path d="M7.3 4.8 L11.2 6.9 L16.6 4.8 M11.2 6.9 V11.2 L15.3 13 L20.7 11.2 M15.3 13 V20.7 M4.1 8.4 L6 9.4" fill="none" stroke="#4a3600" stroke-width="0.8"/></svg>
<div class="t" style="left:362px;top:155px;letter-spacing:-0.05px">dem o (Default) &lt;&lt;Defaul...</div>
<div class="a" style="left:358px;top:282px;width:89px;height:21px;background:#eaf2fa;border:1px solid #5f97c8;border-radius:1px"></div>
<div class="a" style="left:344px;top:178px;width:0;height:0;border-top:3.5px solid transparent;border-bottom:3.5px solid transparent;border-left:4px solid #111"></div><svg class="a" style="left:361px;top:173px" width="19" height="22" viewBox="0 0 19 22"><path d="M0.8 3 Q0.8 1.2 2.5 1.2 L6.5 1.2 L8 3 L16 3 Q17.6 3 17.6 4.6 L17.6 16 Q17.6 17.3 16.3 17.3 L2.1 17.3 Q0.8 17.3 0.8 16 Z" fill="#e0e0e0" stroke="#1a1a1a" stroke-width="1.15"/>
<path d="M1 5 L17.4 5" stroke="#444" stroke-width="0.8"/><rect x="1.5" y="5.5" width="15.4" height="11.1" fill="#f2f2f2"/><circle cx="11" cy="11.3" r="4.6" fill="#fff" stroke="#222" stroke-width="0.9"/><path d="M9 9.5 L11.3 11.6 H13.5" stroke="#222" stroke-width="0.8" fill="none"/><path d="M4.5 12 Q5 7.5 10 6.6" stroke="#2a88c0" stroke-width="2" fill="none"/><path d="M2.3 11.3 L4.6 14.6 L7 11.3Z" fill="#2a88c0"/></svg><div class="t" style="left:384px;top:177px;letter-spacing:-0.12px">History</div>
<svg class="a" style="left:361px;top:195px" width="19" height="22" viewBox="0 0 19 22"><path d="M0.8 3 Q0.8 1.2 2.5 1.2 L6.5 1.2 L8 3 L16 3 Q17.6 3 17.6 4.6 L17.6 16 Q17.6 17.3 16.3 17.3 L2.1 17.3 Q0.8 17.3 0.8 16 Z" fill="#e0e0e0" stroke="#1a1a1a" stroke-width="1.15"/>
<path d="M1 5 L17.4 5" stroke="#444" stroke-width="0.8"/><rect x="1.5" y="5.5" width="15.4" height="11.1" fill="#f2f2f2"/><circle cx="9.5" cy="11.3" r="4.6" fill="#fff" stroke="#222" stroke-width="1"/><path d="M9.5 11.3 L12.3 8.3" stroke="#222" stroke-width="0.9"/><path d="M10.3 14.6 L13.6 11 L14 13.2 Z" fill="#e03010"/><path d="M6.8 9.3h1.2M9.5 7.3v1.2" stroke="#222" stroke-width="0.7"/></svg><div class="t" style="left:384px;top:199px;letter-spacing:-0.12px">Sensors</div>
<div class="a" style="left:344px;top:222px;width:0;height:0;border-top:3.5px solid transparent;border-bottom:3.5px solid transparent;border-left:4px solid #111"></div><svg class="a" style="left:361px;top:217px" width="19" height="22" viewBox="0 0 19 22"><path d="M0.8 3 Q0.8 1.2 2.5 1.2 L6.5 1.2 L8 3 L16 3 Q17.6 3 17.6 4.6 L17.6 16 Q17.6 17.3 16.3 17.3 L2.1 17.3 Q0.8 17.3 0.8 16 Z" fill="#e0e0e0" stroke="#1a1a1a" stroke-width="1.15"/>
<path d="M1 5 L17.4 5" stroke="#444" stroke-width="0.8"/><rect x="1.5" y="5.5" width="15.4" height="11.1" fill="#f2f2f2"/><text x="9.3" y="15.6" text-anchor="middle" font-family="Liberation Serif" font-weight="bold" font-size="12.5" fill="#2a88c0">A</text></svg><div class="t" style="left:384px;top:221px;letter-spacing:-0.12px">Annotations</div>
<div class="a" style="left:344px;top:244px;width:0;height:0;border-top:3.5px solid transparent;border-bottom:3.5px solid transparent;border-left:4px solid #111"></div><svg class="a" style="left:361px;top:239px" width="19" height="22" viewBox="0 0 19 22"><path d="M0.8 3 Q0.8 1.2 2.5 1.2 L6.5 1.2 L8 3 L16 3 Q17.6 3 17.6 4.6 L17.6 16 Q17.6 17.3 16.3 17.3 L2.1 17.3 Q0.8 17.3 0.8 16 Z" fill="#e0e0e0" stroke="#1a1a1a" stroke-width="1.15"/>
<path d="M1 5 L17.4 5" stroke="#444" stroke-width="0.8"/><rect x="1.5" y="5.5" width="15.4" height="11.1" fill="#f2f2f2"/><path d="M9.5 6.8 L13.5 8.5 L13.5 13 L9.5 14.8 L5.5 13 L5.5 8.5 Z" fill="#3a8cc0" stroke="#0a2a40" stroke-width="0.7"/><path d="M5.5 8.5 L9.5 10.3 L13.5 8.5 M9.5 10.3 V14.8" stroke="#0a2a40" stroke-width="0.6" fill="none"/></svg><div class="t" style="left:384px;top:243px;letter-spacing:-0.12px">Solid Bodies(3)</div>
<svg class="a" style="left:361px;top:261px" width="19" height="22" viewBox="0 0 19 22"><circle cx="1.4" cy="1.5" r="1.9" fill="#eee" stroke="#333" stroke-width="0.9"/><circle cx="1.4" cy="7.4" r="1.9" fill="#8ed8f4" stroke="#1a5a80" stroke-width="0.9"/><circle cx="1.4" cy="13.2" r="1.9" fill="#ffd400" stroke="#8a6400" stroke-width="0.9"/><path d="M5.2 1.2H16.6M5.2 7.1H16.6M5.2 13H10" stroke="#1a1a1a" stroke-width="1.8" stroke-linecap="round"/><circle cx="13.9" cy="13.9" r="3.2" fill="#222"/><path d="M13.9 9.6v8.6M9.6 13.9h8.6M10.9 10.9l6 6M16.9 10.9l-6 6" stroke="#222" stroke-width="1.6"/><rect x="13" y="13" width="1.9" height="1.9" fill="#fff"/></svg><div class="t" style="left:384px;top:265px;letter-spacing:-0.12px">Material &lt;not specifi...</div>
<svg class="a" style="left:361px;top:283px" width="19" height="22" viewBox="0 0 19 22"><path d="M3.6 5.1 L15.4 1 L15.4 14.5 L3.6 18.5 Z" fill="none" stroke="#222" stroke-width="0.9"/><path d="M9.5 0.5v18.5" stroke="#222" stroke-width="0.9" stroke-dasharray="5 2.5 4 2"/></svg><div class="t" style="left:384px;top:287px;letter-spacing:-0.12px">Front Plane</div>
<svg class="a" style="left:361px;top:305px" width="19" height="22" viewBox="0 0 19 22"><path d="M3.6 5.1 L15.4 1 L15.4 14.5 L3.6 18.5 Z" fill="none" stroke="#222" stroke-width="0.9"/><path d="M9.5 0.5v18.5" stroke="#222" stroke-width="0.9" stroke-dasharray="5 2.5 4 2"/></svg><div class="t" style="left:384px;top:309px;letter-spacing:-0.12px">Top Plane</div>
<svg class="a" style="left:361px;top:327px" width="19" height="22" viewBox="0 0 19 22"><path d="M3.6 5.1 L15.4 1 L15.4 14.5 L3.6 18.5 Z" fill="none" stroke="#222" stroke-width="0.9"/><path d="M9.5 0.5v18.5" stroke="#222" stroke-width="0.9" stroke-dasharray="5 2.5 4 2"/></svg><div class="t" style="left:384px;top:331px;letter-spacing:-0.12px">Right Plane</div>
<svg class="a" style="left:361px;top:349px" width="19" height="22" viewBox="0 0 19 22"><path d="M3 3.5 V17 H16" fill="none" stroke="#111" stroke-width="1.6"/><path d="M0.8 5 L3 0.5 L5.2 5 Z M14.5 14.8 L19 17 L14.5 19.2 Z" fill="#111"/><rect x="1.5" y="15.5" width="3" height="3" fill="#111"/></svg><div class="t" style="left:384px;top:353px;letter-spacing:-0.12px">Origin</div>
<div class="a" style="left:344px;top:376px;width:0;height:0;border-top:3.5px solid transparent;border-bottom:3.5px solid transparent;border-left:4px solid #111"></div><svg class="a" style="left:361px;top:371px" width="19" height="22" viewBox="0 0 19 22"><defs><linearGradient id="bl1" x1="0" y1="0" x2="1" y2="1"><stop offset="0" stop-color="#8fd2f2"/><stop offset="1" stop-color="#3f8fc0"/></linearGradient><linearGradient id="wf" x1="0" y1="0" x2="1" y2="0"><stop offset="0" stop-color="#fff"/><stop offset="1" stop-color="#d8d8d8"/></linearGradient></defs><path d="M6.2 2.4 L11.7 1.3 L17.5 4.5 L17.5 17.1 L13.6 18.6 L9.3 16 L9.3 6 L6.2 4 Z" fill="url(#wf)" stroke="#222" stroke-width="0.8" stroke-linejoin="round"/><path d="M6.5 3 L13.6 5.6 L17.5 4.5 M13.6 5.6 V18.6" fill="none" stroke="#222" stroke-width="0.7"/><path d="M0.3 6.3 L5.9 5 L11.7 7.5 L11.7 14.3 L4.8 16.8 L0.3 13.4 Z" fill="url(#bl1)" stroke="#0b3a5c" stroke-width="1" stroke-linejoin="round"/><path d="M0.3 6.3 L4.3 8.6 L11.7 7.5 M4.3 8.6 V16.4" fill="none" stroke="#0b3a5c" stroke-width="0.9"/></svg><div class="t" style="left:384px;top:375px;letter-spacing:-0.12px">Extrude-Thin1</div>
<svg class="a" style="left:361px;top:393px" width="19" height="22" viewBox="0 0 19 22"><path d="M0.3 2.8 Q4 0.3 8.5 0.3 Q15 0.6 17.5 5.3 L17.5 12.7 L9 17.6 L0.3 13.7 Z" fill="#ececec" stroke="#222" stroke-width="0.9" stroke-linejoin="round"/><path d="M5.9 2.4 Q9 0.8 14.2 1.2 Q16.8 2.6 17.5 6 L9.3 10.2 Q8.8 5 5.9 2.4 Z" fill="url(#bl1)" stroke="#0b3a5c" stroke-width="0.9"/><path d="M0.3 2.8 L5.9 2.4 M9.3 10.2 V17.6" fill="none" stroke="#222" stroke-width="0.8"/></svg><div class="t" style="left:384px;top:397px;letter-spacing:-0.12px">Fillet1</div>
<div class="a" style="left:344px;top:420px;width:0;height:0;border-top:3.5px solid transparent;border-bottom:3.5px solid transparent;border-left:4px solid #111"></div><svg class="a" style="left:361px;top:415px" width="19" height="22" viewBox="0 0 19 22"><defs><linearGradient id="bl1" x1="0" y1="0" x2="1" y2="1"><stop offset="0" stop-color="#8fd2f2"/><stop offset="1" stop-color="#3f8fc0"/></linearGradient><linearGradient id="wf" x1="0" y1="0" x2="1" y2="0"><stop offset="0" stop-color="#fff"/><stop offset="1" stop-color="#d8d8d8"/></linearGradient></defs><path d="M6.2 2.4 L11.7 1.3 L17.5 4.5 L17.5 17.1 L13.6 18.6 L9.3 16 L9.3 6 L6.2 4 Z" fill="url(#wf)" stroke="#222" stroke-width="0.8" stroke-linejoin="round"/><path d="M6.5 3 L13.6 5.6 L17.5 4.5 M13.6 5.6 V18.6" fill="none" stroke="#222" stroke-width="0.7"/><path d="M0.3 6.3 L5.9 5 L11.7 7.5 L11.7 14.3 L4.8 16.8 L0.3 13.4 Z" fill="url(#bl1)" stroke="#0b3a5c" stroke-width="1" stroke-linejoin="round"/><path d="M0.3 6.3 L4.3 8.6 L11.7 7.5 M4.3 8.6 V16.4" fill="none" stroke="#0b3a5c" stroke-width="0.9"/></svg><div class="t" style="left:384px;top:419px;letter-spacing:-0.12px">Extrude-Thin2</div>
<div class="a" style="left:344px;top:442px;width:0;height:0;border-top:3.5px solid transparent;border-bottom:3.5px solid transparent;border-left:4px solid #111"></div><svg class="a" style="left:361px;top:437px" width="19" height="22" viewBox="0 0 19 22"><defs><linearGradient id="bl1" x1="0" y1="0" x2="1" y2="1"><stop offset="0" stop-color="#8fd2f2"/><stop offset="1" stop-color="#3f8fc0"/></linearGradient><linearGradient id="wf" x1="0" y1="0" x2="1" y2="0"><stop offset="0" stop-color="#fff"/><stop offset="1" stop-color="#d8d8d8"/></linearGradient></defs><path d="M6.2 2.4 L11.7 1.3 L17.5 4.5 L17.5 17.1 L13.6 18.6 L9.3 16 L9.3 6 L6.2 4 Z" fill="url(#wf)" stroke="#222" stroke-width="0.8" stroke-linejoin="round"/><path d="M6.5 3 L13.6 5.6 L17.5 4.5 M13.6 5.6 V18.6" fill="none" stroke="#222" stroke-width="0.7"/><path d="M0.3 6.3 L5.9 5 L11.7 7.5 L11.7 14.3 L4.8 16.8 L0.3 13.4 Z" fill="url(#bl1)" stroke="#0b3a5c" stroke-width="1" stroke-linejoin="round"/><path d="M0.3 6.3 L4.3 8.6 L11.7 7.5 M4.3 8.6 V16.4" fill="none" stroke="#0b3a5c" stroke-width="0.9"/></svg><div class="t" style="left:384px;top:441px;letter-spacing:-0.12px">Boss-Extrude1</div>
<svg class="a" style="left:361px;top:459px" width="19" height="22" viewBox="0 0 19 22"><path d="M2 4.5 L8.5 2 L16 4 L16 7.5 L9.5 10 L2 8 Z" fill="#eee" stroke="#222" stroke-width="0.8" stroke-linejoin="round"/><path d="M2 4.5 L9.5 6.5 L16 4 M9.5 6.5 V10" stroke="#222" stroke-width="0.6" fill="none"/><path d="M2 12 Q8 9 16 10 L16 13 L9.5 17 L2 14.5 Z" fill="#3a90c8" stroke="#0a2a40" stroke-width="0.8"/><path d="M2 14.5 L9.5 12.8 L16 13" fill="none" stroke="#0a2a40" stroke-width="0.6"/><path d="M2 14.5 L2 16.5 L9.5 19 L16 15.5 L16 13" fill="#f0f0f0" stroke="#222" stroke-width="0.8"/></svg><div class="t" style="left:384px;top:463px;letter-spacing:-0.12px">SurfaceCut1</div>


<svg class="a" style="left:0;top:0" width="1514" height="1343" viewBox="0 0 1514 1343">
 <defs><radialGradient id="hd" cx="0.35" cy="0.35" r="0.7"><stop offset="0" stop-color="#9fd0ff"/><stop offset="0.6" stop-color="#3f8ee0"/><stop offset="1" stop-color="#2a6ab8"/></radialGradient></defs>
 <g fill="#b3b17e" stroke="#f4ef6a" stroke-width="0.9" stroke-linejoin="round">
  <path d="M703.7 407.8 L862.9 420.5 L862.9 481.8 L704.9 467.2 Z"/>
  <path d="M704.9 467.3 L713.8 469.0 L722.5 471.1 L731.0 473.7 L739.3 476.8 L747.3 480.2 L755.2 483.9 L762.8 488.1 L770.1 492.5 L777.2 497.2 L784.1 502.3 L790.7 507.6 L797.0 513.1 L803.0 518.8 L808.8 524.8 L814.2 531.0 L819.5 537.4 L824.4 544.0 L829.1 550.7 L833.5 557.6 L837.6 564.7 L841.4 572.0 L844.9 579.4 L848.2 586.9 L851.1 594.6 L853.8 602.5 L856.1 610.4 L858.1 618.5 L859.8 626.7 L861.1 635.0 L862.1 643.4 L862.7 651.9 L862.9 660.5 L862.7 669.2 L862.1 677.8 L861.1 686.5 L859.6 695.2 L857.7 703.9 L855.3 712.5 L852.4 721.0 L849.1 729.4 L845.2 737.6 L840.9 745.6 L836.0 753.4 L830.7 760.9 L824.9 768.1 L818.6 775.0 L811.9 781.4 L804.8 787.4 L797.2 792.9 L789.4 797.8 L781.2 802.3 L772.7 806.2 L764.0 809.5 L755.1 812.3 L746.1 814.4 L737.0 816.0 L727.8 817.0 L718.6 817.4 L709.5 817.3 L709.5 804.4 L718.2 805.2 L726.9 805.4 L735.7 804.9 L744.4 803.9 L753.1 802.1 L761.6 799.7 L769.9 796.7 L777.9 793.0 L785.6 788.7 L793.0 783.9 L800.0 778.6 L806.5 772.8 L812.6 766.5 L818.2 759.9 L823.4 753.0 L828.0 745.8 L832.2 738.4 L835.9 730.8 L839.1 723.1 L841.9 715.3 L844.2 707.5 L846.2 699.6 L847.7 691.7 L848.8 683.9 L849.6 676.0 L850.0 668.2 L850.1 660.5 L849.8 652.9 L849.3 645.3 L848.4 637.8 L847.3 630.4 L845.9 623.1 L844.2 615.8 L842.3 608.7 L840.1 601.6 L837.6 594.7 L834.9 587.8 L831.9 581.1 L828.6 574.4 L825.1 567.8 L821.3 561.4 L817.3 555.1 L813.0 548.9 L808.3 542.8 L803.5 536.9 L798.3 531.1 L792.8 525.6 L787.0 520.2 L781.0 515.0 L774.6 510.1 L767.9 505.5 L760.9 501.1 L753.7 497.1 L746.1 493.5 L738.3 490.3 L730.2 487.5 L722.0 485.2 L713.5 483.5 L704.9 482.3 Z"/>
  <path d="M837.4 972.8 L837 766 Q838 748 852 746.5 L862.5 746.5 L862.5 1004.3 L711.4 977.8 L711.4 951.2 Z"/>
 </g>
 <g fill="none" stroke="#4a9cf0" stroke-width="1.1">
  <path d="M695.3 376.2 L871.3 390.1 L870.9 1034.1 L704.7 1003.8 Z"/>
 </g>
 <g fill="url(#hd)">
  <circle cx="695.3" cy="376.2" r="3.2"/><circle cx="782.1" cy="382.8" r="3.2"/><circle cx="871.3" cy="390.1" r="3.2"/>
  <circle cx="700.2" cy="699.1" r="3.2"/><circle cx="871.4" cy="721.8" r="3.2"/>
  <circle cx="704.7" cy="1003.8" r="3.2"/><circle cx="786.6" cy="1018.8" r="3.2"/><circle cx="870.9" cy="1034.1" r="3.2"/>
 </g>
 <text x="0" y="0" transform="translate(697.5 392.8) rotate(4.4)" font-family="Liberation Sans" font-size="16.5" letter-spacing="1.1" fill="#72aaea" stroke="#72aaea" stroke-width="0.55">Front Plane</text>
</svg>


<svg class="a" style="left:1150px;top:124px" width="364" height="28" viewBox="1150 124 364 28">
 <defs>
  <radialGradient id="lens" cx="0.4" cy="0.35" r="0.7"><stop offset="0" stop-color="#ffffff"/><stop offset="1" stop-color="#c9d3dc"/></radialGradient>
  <linearGradient id="hand" x1="0" y1="0" x2="1" y2="1"><stop offset="0" stop-color="#8fc6e6"/><stop offset="1" stop-color="#3a84b6"/></linearGradient>
  <linearGradient id="cubeF" x1="0" y1="0" x2="1" y2="1"><stop offset="0" stop-color="#a6d6f0"/><stop offset="1" stop-color="#4e9cc8"/></linearGradient>
  <linearGradient id="mon" x1="0" y1="0" x2="0" y2="1"><stop offset="0" stop-color="#f2f2f2"/><stop offset="1" stop-color="#cfcfcf"/></linearGradient>
  <radialGradient id="dis" cx="0.4" cy="0.35" r="0.7"><stop offset="0" stop-color="#f4f4f4"/><stop offset="1" stop-color="#d6d6d6"/></radialGradient>
 </defs>
 <!-- zoom to fit -->
 <path d="M1163.5 140 L1157.5 146.5" stroke="url(#hand)" stroke-width="3.2" stroke-linecap="round"/>
 <circle cx="1168.5" cy="135" r="6.3" fill="url(#lens)" stroke="#6c7680" stroke-width="1.1"/>
 <path d="M1168.5 130.5 l-1.8 2h3.6z M1168.5 139.5 l-1.8 -2h3.6z M1164 135 l2 -1.8v3.6z M1173 135 l-2 -1.8v3.6z" fill="#555"/>
 <!-- zoom to area -->
 <rect x="1188.5" y="129.5" width="12" height="12" fill="none" stroke="#333" stroke-width="1" stroke-dasharray="2 1.5"/>
 <path d="M1187 141.5 L1182.5 146.5" stroke="url(#hand)" stroke-width="3.2" stroke-linecap="round"/>
 <circle cx="1191.5" cy="137" r="6" fill="url(#lens)" stroke="#6c7680" stroke-width="1.1"/>
 <!-- previous view -->
 <path d="M1211 145 L1224 131 L1227 134 L1214 147 Z" fill="#e8e8e8" stroke="#555" stroke-width="0.9"/>
 <path d="M1213 140 L1218.5 134.5" stroke="#999" stroke-width="0.6"/>
 <ellipse cx="1212" cy="145" rx="2.5" ry="3.5" transform="rotate(45 1212 145)" fill="#bbb" stroke="#555" stroke-width="0.8"/>
 <path d="M1218 143 L1222 139.5 L1222 142 L1227 142 L1227 144.5 L1222 144.5 L1222 147 Z" fill="#3f8ac0"/>
 <!-- section view disabled -->
 <path d="M1236 133 Q1244 129 1252 133 L1252 146 Q1244 149 1236 146 Z" fill="#ececec" stroke="#d2d2d2" stroke-width="0.9"/>
 <path d="M1241 135 L1241 147 M1247 135 L1247 147" stroke="#d8d8d8" stroke-width="0.9"/>
 <!-- dynamic annotation -->
 <path d="M1265 144 L1277 131 L1280 134 L1268 147 Z" fill="#e8e8e8" stroke="#555" stroke-width="0.9"/>
 <path d="M1266 134 L1271 129 L1270.5 132.5 L1274.5 130.5 L1268 138 L1269 134.5 Z" fill="#f2c230" stroke="#d86a10" stroke-width="0.6"/>
 <text x="1270" y="147.5" font-family="Liberation Serif" font-size="11" font-weight="bold" fill="#3f8ac0">A</text>
 <!-- view orientation -->
 <path d="M1288 134 L1293 129.5 L1305.5 129.5 L1305.5 142 L1301 146.5 L1288 146.5 Z" fill="#f4f4f4" stroke="#444" stroke-width="0.9"/>
 <rect x="1288" y="134" width="13" height="12.5" fill="url(#cubeF)" stroke="#2f5f80" stroke-width="0.9"/>
 <path d="M1301 134 L1305.5 129.5" stroke="#444" stroke-width="0.9"/>
 <path d="M1297 131 L1297 133 M1303 137 L1303 140" stroke="#444" stroke-width="0.8"/>
 <path d="M1312.5 136.5h6l-3 3z" fill="#8a8a8a"/>
 <!-- display style -->
 <path d="M1328 132.5 L1335 128.5 L1345 132 L1345 144 L1338 148 L1328 144.5 Z" fill="#f7f7f7" stroke="#555" stroke-width="0.9"/>
 <path d="M1328 132.5 L1338 136 L1338 148 L1328 144.5 Z" fill="url(#cubeF)" stroke="#2f5f80" stroke-width="0.8"/>
 <path d="M1338 136 L1345 132" stroke="#555" stroke-width="0.8"/>
 <path d="M1352.5 136.5h6l-3 3z" fill="#8a8a8a"/>
 <!-- hide/show -->
 <path d="M1367 138.5 Q1376 129 1385 138.5 Q1376 148 1367 138.5 Z" fill="#f0f0f0" stroke="#9a9a9a" stroke-width="0.9"/>
 <circle cx="1376" cy="137.5" r="4.3" fill="#6a6a6a"/><path d="M1376 131 V147" stroke="#333" stroke-width="1.1"/>
 <path d="M1392.5 136.5h6l-3 3z" fill="#8a8a8a"/>
 <!-- edit appearance disabled -->
 <circle cx="1415" cy="136" r="7.5" fill="url(#dis)"/>
 <path d="M1412 147 L1423 136 L1426 139 L1415 149 L1411 149.5 Z" fill="#e6e6e6" stroke="#d0d0d0" stroke-width="0.8"/>
 <!-- scenes disabled -->
 <circle cx="1441" cy="135.5" r="7.5" fill="url(#dis)"/>
 <path d="M1432 139 L1432 147.5 L1451 147.5 L1451 139 L1445 139 L1445 143 L1438 143 L1438 139 Z" fill="#dedede"/>
 <path d="M1434 145h2M1440 145h3M1446 145h2" stroke="#f7f7f7" stroke-width="1.5"/>
 <path d="M1458.5 136.5h6l-3 3z" fill="#8a8a8a"/>
 <!-- view settings -->
 <rect x="1473.5" y="130.5" width="17" height="11.5" fill="url(#mon)" stroke="#555" stroke-width="1"/>
 <path d="M1482 142 V144.5 M1478.5 145.5 H1485.5" stroke="#555" stroke-width="1.3"/>
 <path d="M1498.5 136.5h6l-3 3z" fill="#8a8a8a"/>
</svg>
<svg class="a" style="left:330px;top:1255px" width="70" height="70" viewBox="330 1255 70 70">
 <defs>
  <linearGradient id="yg" x1="0" y1="0" x2="1" y2="0"><stop offset="0" stop-color="#1d6a1d"/><stop offset="0.5" stop-color="#4cb04c"/><stop offset="1" stop-color="#1d6a1d"/></linearGradient>
  <linearGradient id="xg" x1="0" y1="0" x2="0" y2="1"><stop offset="0" stop-color="#a01818"/><stop offset="0.5" stop-color="#e85050"/><stop offset="1" stop-color="#a01818"/></linearGradient>
 </defs>
 <path d="M355.2 1302.5 L355.6 1284 L357.8 1284 L357.6 1302.5 Z" fill="url(#yg)"/>
 <path d="M352 1284.5 L356.6 1275 L361 1284.5 Z" fill="url(#yg)"/>
 <path d="M357 1302 L374 1304.5 L374 1307.5 L357 1305 Z" fill="url(#xg)"/>
 <path d="M373.5 1301 L383 1307 L373.5 1311 Z" fill="url(#xg)"/>
 <path d="M357 1303.5 L349 1308" stroke="#1a1a70" stroke-width="2.6" stroke-linecap="round"/>
 <circle cx="348" cy="1308.5" r="3.9" fill="#1c1ca0"/>
 <path d="M353 1264.5 L356.6 1268.5 L360.2 1264.5 M356.6 1268.5 V1273" fill="none" stroke="#128012" stroke-width="0.9"/>
 <path d="M384 1303 L389 1312 M389 1303 L384 1312" stroke="#ff1010" stroke-width="1"/>
 <path d="M339 1306.5 H344 L339.5 1314.5 H344.5" fill="none" stroke="#1010ff" stroke-width="1"/>
</svg>

</body></html>
